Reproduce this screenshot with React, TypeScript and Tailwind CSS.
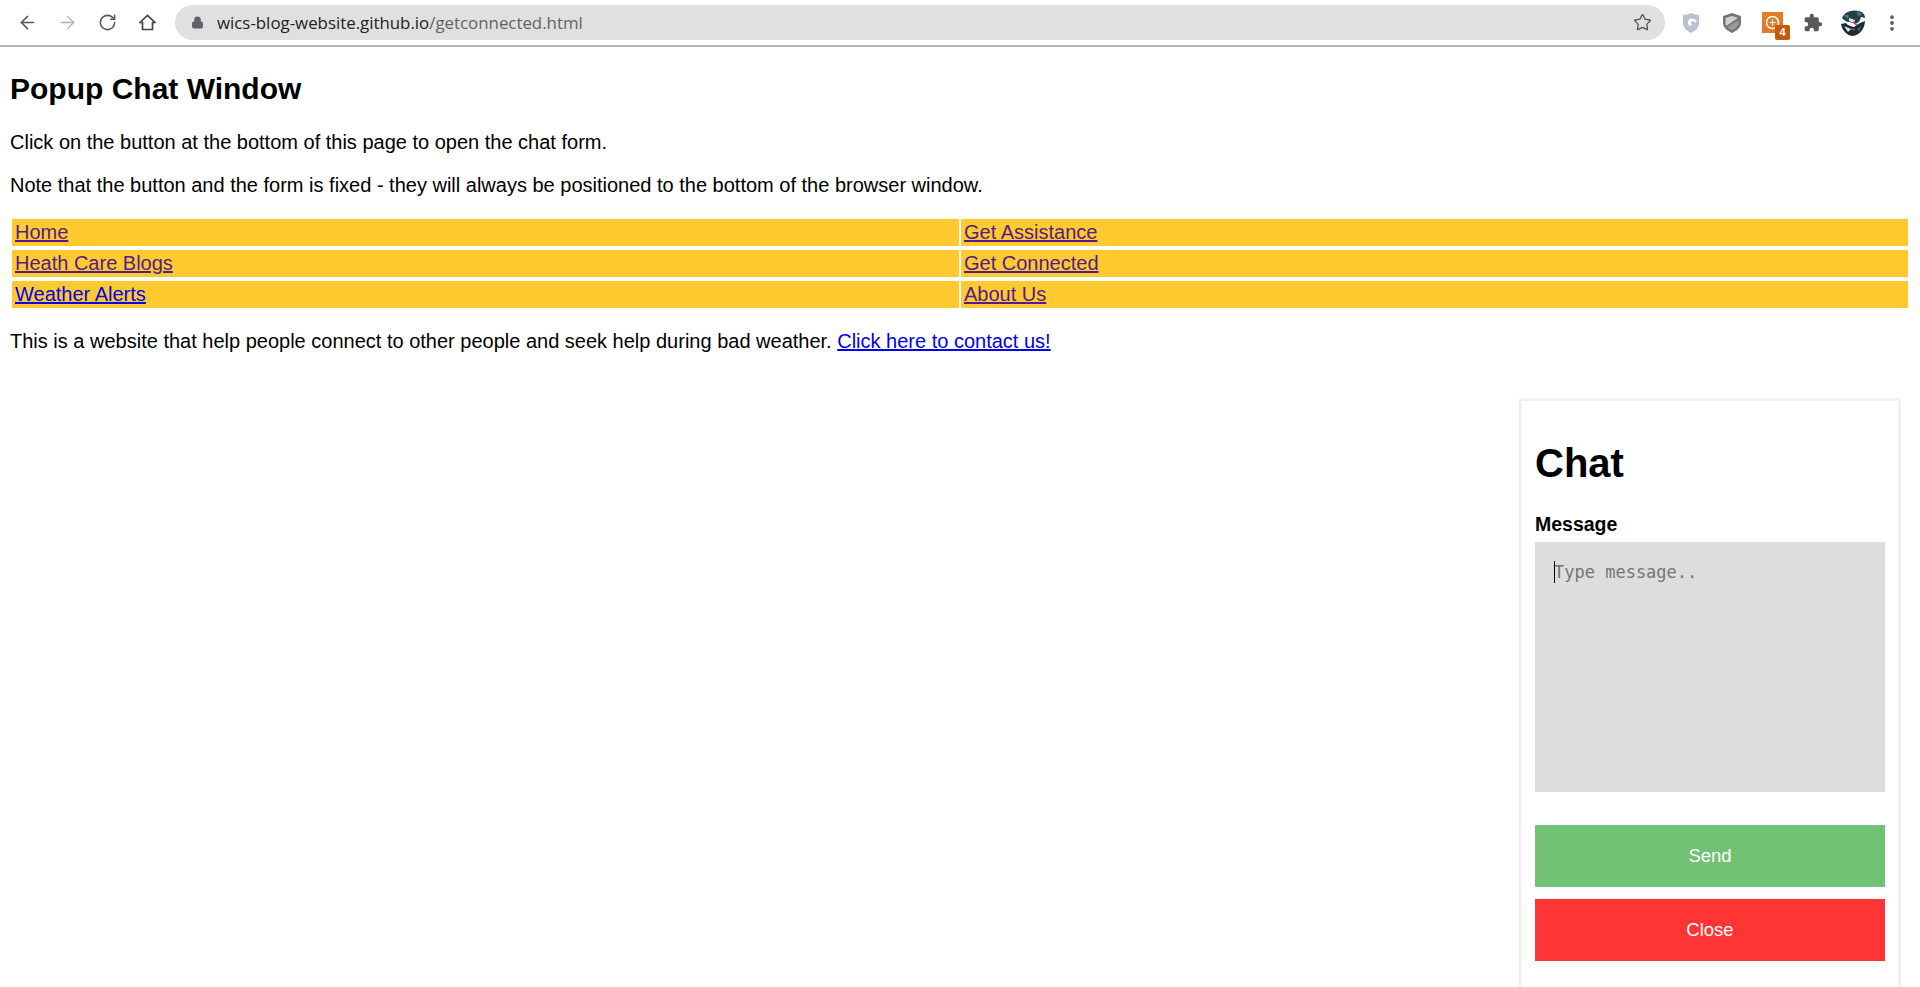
import React from "react";
import { ArrowLeft, ArrowRight, RotateCw, Star, Lock, MoreVertical } from "lucide-react";

const links = [
  { label: "Home", color: "text-[#551a8b]" },
  { label: "Get Assistance", color: "text-[#551a8b]" },
  { label: "Heath Care Blogs", color: "text-[#551a8b]" },
  { label: "Get Connected", color: "text-[#551a8b]" },
  { label: "Weather Alerts", color: "text-[#0000ee]" },
  { label: "About Us", color: "text-[#551a8b]" },
];

function Toolbar() {
  return (
    <div className="h-[47px] border-b-[2px] border-[#b4b4b4] bg-white flex items-center font-['Open_Sans',sans-serif]">
      <div className="flex items-center pl-[7px] w-[175px]">
        <div className="w-[40px] flex justify-center"><ArrowLeft size={21} strokeWidth={1.7} className="text-[#555]" /></div>
        <div className="w-[40px] flex justify-center"><ArrowRight size={21} strokeWidth={1.5} className="text-[#b0b0b0]" /></div>
        <div className="w-[40px] flex justify-center"><RotateCw size={19} strokeWidth={1.9} className="text-[#555]" /></div>
        <div className="w-[40px] flex justify-center">
          <svg width="17" height="17" viewBox="0 0 17 17" fill="none" stroke="#444" strokeWidth="1.7" strokeLinejoin="miter">
            <path d="M1 8.5 L8.5 1.5 L16 8.5 H13.5 V15.5 H3.5 V8.5 Z" />
          </svg>
        </div>
      </div>
      <div className="w-[1490px] h-[35px] rounded-full bg-[#e0e0e0] flex items-center pl-[16px] pr-[13px]">
        <Lock size={13} fill="#5f6368" className="text-[#5f6368]" strokeWidth={2} />
        <span className="ml-[13px] text-[16.85px] text-[#222] whitespace-nowrap">
          wics-blog-website.github.io<span className="text-[#5f6368]">/getconnected.html</span>
        </span>
        <Star size={19} strokeWidth={1.7} className="ml-auto text-[#555]" />
      </div>
      <div className="flex-1 flex items-center pl-[18px]">
        <svg width="16" height="20" viewBox="0 0 16 20">
          <path d="M0 2 Q4 2 8 0 Q12 2 16 2 V10 C16 15 12 18 8 20 C4 18 0 15 0 10 Z" fill="#b9c0cf" />
          <path d="M12 6.5 C8 4 4 7 5 11 C6 13 8 13 9.5 12 C7.5 11 7.5 8 10.5 8.3 C11.5 8.5 12 9 12.3 10 L14 8 Z" fill="#fff" />
        </svg>
        <svg width="18" height="20" viewBox="0 0 18 20" className="ml-[24px]">
          <path d="M9 0 L18 3 V10 C18 15 13 18 9 20 C5 18 0 15 0 10 V3 Z" fill="#757575" />
          <path d="M9 3 L15 5 L3 13 C2.6 12 2.5 11 2.5 10 V5 Z" fill="#cfcfcf" />
          <path d="M15.5 7.5 V10 C15.5 13 12 16 9 17.3 C7 16.5 5.5 15.5 4.5 14 Z" fill="#9a9a9a" />
        </svg>
        <div className="relative ml-[21px] w-[21px] h-[21px] bg-[#e07b2c] flex items-center justify-center">
          <svg width="15" height="15" viewBox="0 0 15 15">
            <circle cx="7.5" cy="7.5" r="6" fill="none" stroke="#fff" strokeWidth="1.5" />
            <path d="M7.5 4.5 V10.5 M4.5 7.5 H10.5" stroke="#fff" strokeWidth="1.2" />
          </svg>
          <span className="absolute left-[13px] top-[13px] w-[15px] h-[15px] rounded-[2px] bg-[#c45a08] text-white text-[11px] font-bold leading-[15px] text-center font-['Liberation_Sans',sans-serif]">
            4
          </span>
        </div>
        <svg width="20" height="20" viewBox="0 0 24 24" className="ml-[20px]" fill="#5a5a5a">
          <path d="M20.5 11H19V7a2 2 0 0 0-2-2h-4V3.5a2.5 2.5 0 0 0-5 0V5H4a2 2 0 0 0-2 2v3.8h1.5a2.7 2.7 0 0 1 0 5.4H2V20a2 2 0 0 0 2 2h3.8v-1.5a2.7 2.7 0 0 1 5.4 0V22H17a2 2 0 0 0 2-2v-4h1.5a2.5 2.5 0 0 0 0-5z" />
        </svg>
        <svg width="26" height="28" viewBox="0 0 26 28" className="ml-[17px]">
          <path d="M2 9 C4 3 12 0 19 2 C23 3 25 6 25 9 L21 8 C20 11 19 14 17 14 C14 15 11 13 9 13 C6 13 4 11 2 9 Z" fill="#24404b" />
          <path d="M3 6 L9 6 L8 10 Z M17 2 L22 5 L18 8 Z" fill="#51717d" />
          <path d="M9 9 L15 11 L14 14 L9 12 Z" fill="#e9e3e6" />
          <path d="M13 13 L17 16" stroke="#b3475c" strokeWidth="1.6" />
          <path d="M1 15 L6 14 C8 17 11 17 14 18 L20 14 L25 12 C25 19 20 26 13 27 C7 27 2 21 1 15 Z" fill="#182a33" />
          <path d="M4 17 L11 20 L8 23 Z" fill="#dfe6e8" />
          <path d="M11 20 L15 21" stroke="#a84a5e" strokeWidth="1.4" />
          <path d="M17 20 L22 16 L19 23 Z" fill="#3e5f6b" />
        </svg>
        <MoreVertical size={20} strokeWidth={2.6} className="ml-[16px] text-[#5a5a5a]" />
      </div>
    </div>
  );
}

export default function App() {
  return (
    <div className="h-[987px] overflow-hidden bg-white text-black font-['Liberation_Sans',Arial,sans-serif]">
      <Toolbar />
      <div className="px-[10px]">
        <h2 className="mt-[25px] text-[30px] leading-[34px] font-bold">Popup Chat Window</h2>
        <p className="mt-[25px] text-[20px] leading-[23px]">Click on the button at the bottom of this page to open the chat form.</p>
        <p className="mt-[20px] text-[20px] leading-[23px]">Note that the button and the form is fixed - they will always be positioned to the bottom of the browser window.</p>
        <div className="mt-[22px] mx-[2px] grid grid-cols-2 gap-x-[2px] gap-y-[4px]">
          {links.map((l) => (
            <div key={l.label} className="h-[27px] bg-[#ffca2f] pl-[3px] text-[20px] leading-[26px]">
              <a href="#" className={`underline ${l.color}`}>{l.label}</a>
            </div>
          ))}
        </div>
        <p className="mt-[22px] text-[20px] leading-[23px]">
          This is a website that help people connect to other people and seek help during bad weather.{" "}
          <a href="#" className="underline text-[#0000ee]">Click here to contact us!</a>
        </p>
        <div className="flex justify-end mt-[45px] pr-[9px]">
          <form className="w-[382px] h-[600px] border-[3px] border-[#f1f1f1] bg-white px-[13px] shrink-0">
            <h1 className="mt-[39px] text-[40px] leading-[46px] font-bold">Chat</h1>
            <label className="block mt-[27px] text-[19.5px] leading-[23px] font-bold">Message</label>
            <div className="relative mt-[6px] w-[350px] h-[250px]">
              <textarea
                placeholder="Type message.."
                className="block w-full h-full resize-none bg-[#dddddd] pl-[19px] pt-[20px] text-[17px] leading-[20px] font-['DejaVu_Sans_Mono',monospace] placeholder:text-[#757575] outline-none"
              />
              <span className="absolute left-[19px] top-[19px] w-px h-[22px] bg-black" />
            </div>
            <button type="button" className="block mt-[33px] w-[350px] h-[62px] bg-[#71c174] text-white text-[18.5px]">Send</button>
            <button type="button" className="block mt-[12px] w-[350px] h-[62px] bg-[#ff3535] text-white text-[18.5px]">Close</button>
          </form>
        </div>
      </div>
    </div>
  );
}
